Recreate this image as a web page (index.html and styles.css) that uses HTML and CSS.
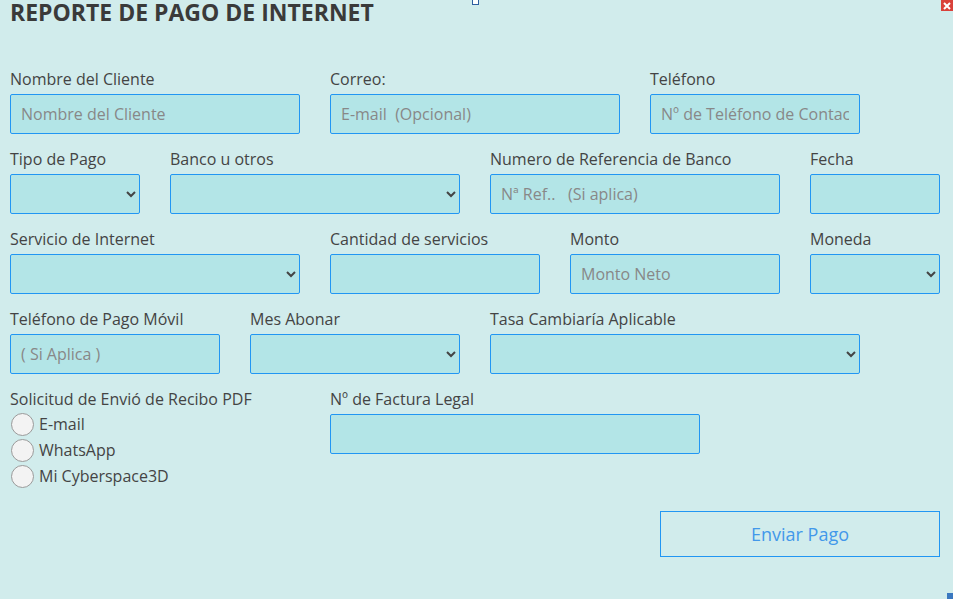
FILE: index.html
```html
<!DOCTYPE html>
<html lang="es">
<head>
<meta charset="utf-8">
<title>Reporte de Pago de Internet</title>
<link rel="stylesheet" href="styles.css">
</head>
<body>
<div class="page">
  <span class="marker"></span>
  <span class="close">
    <svg width="8" height="8" viewBox="0 0 8 8"><path d="M1 1 L7 7 M7 1 L1 7" stroke="#fff" stroke-width="2"/></svg>
  </span>
  <h1 class="title">REPORTE DE PAGO DE INTERNET</h1>
  <form class="form">
    <div class="field s4 first"><label>Nombre del Cliente</label><input type="text" placeholder="Nombre del Cliente"></div>
    <div class="field s4"><label>Correo:</label><input type="text" placeholder="E-mail  (Opcional)"></div>
    <div class="field s3"><label>Teléfono</label><input type="text" placeholder="Nº de Teléfono de Contacto"></div>

    <div class="field s2 first"><label>Tipo de Pago</label><select><option></option></select></div>
    <div class="field s4"><label>Banco u otros</label><select><option></option></select></div>
    <div class="field s4"><label>Numero de Referencia de Banco</label><input type="text" placeholder="Nª Ref..   (Si aplica)"></div>
    <div class="field s2"><label>Fecha</label><input type="text"></div>

    <div class="field s4 first"><label>Servicio de Internet</label><select><option></option></select></div>
    <div class="field s3"><label>Cantidad de servicios</label><input type="text"></div>
    <div class="field s3"><label>Monto</label><input type="text" placeholder="Monto Neto"></div>
    <div class="field s2"><label>Moneda</label><select><option></option></select></div>

    <div class="field s3 first"><label>Teléfono de Pago Móvil</label><input type="text" placeholder="( Si Aplica )"></div>
    <div class="field s3"><label>Mes Abonar</label><select><option></option></select></div>
    <div class="field s5"><label>Tasa Cambiaría Aplicable</label><select><option></option></select></div>

    <div class="field s4 first">
      <label>Solicitud de Envió de Recibo PDF</label>
      <div class="radios">
        <label class="radio"><span class="dot"></span>E-mail</label>
        <label class="radio"><span class="dot"></span>WhatsApp</label>
        <label class="radio"><span class="dot"></span>Mi Cyberspace3D</label>
      </div>
    </div>
    <div class="field s5"><label>Nº de Factura Legal</label><input type="text"></div>

    <div class="actions"><button type="button" class="send">Enviar Pago</button></div>
  </form>
  <span class="corner"></span>
</div>
</body>
</html>
```

FILE: styles.css
```css
* { box-sizing: border-box; }
html, body { margin: 0; height: 100%; }
body {
  background: #d1ecec;
  font-family: "Open Sans", "Noto Sans", sans-serif;
  color: #444;
  overflow: hidden;
}
.page {
  position: relative;
  height: 599px;
}
.title {
  margin: 0;
  padding: 0 0 0 10px;
  font-size: 23px;
  line-height: 24px;
  font-weight: 700;
  color: #3a3a3a;
}
.marker {
  position: absolute;
  left: 472px;
  top: -2px;
  width: 7px;
  height: 7px;
  border: 1px solid #2f5fa0;
  background: #fff;
}
.close {
  position: absolute;
  right: 0;
  top: 0;
  width: 12px;
  height: 11px;
  background: #d9413a;
  display: flex;
  align-items: center;
  justify-content: center;
}
.corner {
  position: absolute;
  right: 0;
  bottom: 0;
  width: 6px;
  height: 6px;
  background: #3a78c0;
}
.form {
  display: grid;
  grid-template-columns: repeat(12, 50px);
  column-gap: 30px;
  row-gap: 15px;
  padding: 45px 0 0 10px;
}
.field { display: flex; flex-direction: column; }
.first { grid-column-start: 1; }
.s2 { grid-column-end: span 2; }
.s3 { grid-column-end: span 3; }
.s4 { grid-column-end: span 4; }
.s5 { grid-column-end: span 5; }
.field > label {
  font-size: 16px;
  line-height: 20px;
  margin-bottom: 5px;
  color: #444;
  white-space: nowrap;
}
input, select {
  height: 40px;
  width: 100%;
  background: #b3e5e7;
  border: 1px solid #2196f3;
  border-radius: 2px;
  font-family: "Open Sans", sans-serif;
  font-size: 16px;
  color: #444;
  padding: 0 10px;
  outline: none;
}
input::placeholder { color: #888; }
.radios { display: flex; flex-direction: column; margin-top: -3px; }
.radio {
  display: flex;
  align-items: center;
  height: 26px;
  font-size: 16px;
  color: #444;
}
.dot {
  width: 23px;
  height: 23px;
  border-radius: 50%;
  border: 1px solid #9a9a9a;
  background: #f3f3f3;
  margin: 0 5px 0 1px;
  flex: none;
}
.actions {
  grid-column: 1 / -1;
  display: flex;
  justify-content: flex-end;
  padding-top: 7px;
}
.send {
  width: 280px;
  height: 46px;
  background: transparent;
  border: 1px solid #2196f3;
  border-radius: 0;
  color: #4298ea;
  font-family: "Open Sans", sans-serif;
  font-size: 18px;
}
```
